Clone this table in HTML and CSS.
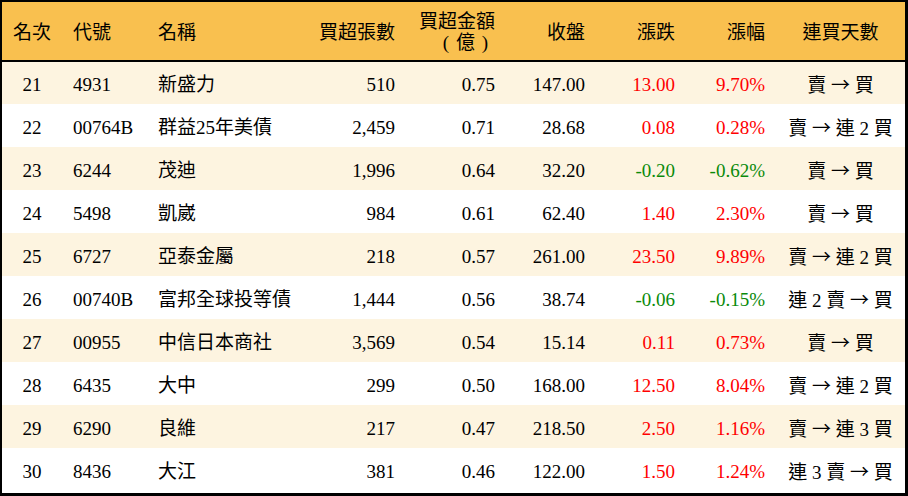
FILE: index.html
```html
<!DOCTYPE html>
<html lang="zh-Hant">
<head>
<meta charset="utf-8">
<link rel="stylesheet" href="styles.css">
</head>
<body>
<div class="frame">
<table class="rank">
  <colgroup>
    <col class="c1"><col class="c2"><col class="c3"><col class="c4"><col class="c5"><col class="c6"><col class="c7"><col class="c8"><col class="c9">
  </colgroup>
  <thead>
    <tr>
      <th class="ctr">名次</th>
      <th class="lft">代號</th>
      <th class="lft">名稱</th>
      <th class="rgt">買超張數</th>
      <th class="rgt two">買超金額<br><span class="paren">(&nbsp;億&nbsp;)</span></th>
      <th class="rgt">收盤</th>
      <th class="rgt">漲跌</th>
      <th class="rgt">漲幅</th>
      <th class="ctr">連買天數</th>
    </tr>
  </thead>
  <tbody>
    <tr class="odd"><td class="ctr">21</td><td class="lft">4931</td><td class="lft">新盛力</td><td class="rgt">510</td><td class="rgt">0.75</td><td class="rgt">147.00</td><td class="rgt up">13.00</td><td class="rgt up">9.70%</td><td class="ctr">賣 <span class="arr">→</span> 買</td></tr>
    <tr><td class="ctr">22</td><td class="lft">00764B</td><td class="lft">群益25年美債</td><td class="rgt">2,459</td><td class="rgt">0.71</td><td class="rgt">28.68</td><td class="rgt up">0.08</td><td class="rgt up">0.28%</td><td class="ctr">賣 <span class="arr">→</span> 連 2 買</td></tr>
    <tr class="odd"><td class="ctr">23</td><td class="lft">6244</td><td class="lft">茂迪</td><td class="rgt">1,996</td><td class="rgt">0.64</td><td class="rgt">32.20</td><td class="rgt dn">-0.20</td><td class="rgt dn">-0.62%</td><td class="ctr">賣 <span class="arr">→</span> 買</td></tr>
    <tr><td class="ctr">24</td><td class="lft">5498</td><td class="lft">凱崴</td><td class="rgt">984</td><td class="rgt">0.61</td><td class="rgt">62.40</td><td class="rgt up">1.40</td><td class="rgt up">2.30%</td><td class="ctr">賣 <span class="arr">→</span> 買</td></tr>
    <tr class="odd"><td class="ctr">25</td><td class="lft">6727</td><td class="lft">亞泰金屬</td><td class="rgt">218</td><td class="rgt">0.57</td><td class="rgt">261.00</td><td class="rgt up">23.50</td><td class="rgt up">9.89%</td><td class="ctr">賣 <span class="arr">→</span> 連 2 買</td></tr>
    <tr><td class="ctr">26</td><td class="lft">00740B</td><td class="lft">富邦全球投等債</td><td class="rgt">1,444</td><td class="rgt">0.56</td><td class="rgt">38.74</td><td class="rgt dn">-0.06</td><td class="rgt dn">-0.15%</td><td class="ctr">連 2 賣 <span class="arr">→</span> 買</td></tr>
    <tr class="odd"><td class="ctr">27</td><td class="lft">00955</td><td class="lft">中信日本商社</td><td class="rgt">3,569</td><td class="rgt">0.54</td><td class="rgt">15.14</td><td class="rgt up">0.11</td><td class="rgt up">0.73%</td><td class="ctr">賣 <span class="arr">→</span> 買</td></tr>
    <tr><td class="ctr">28</td><td class="lft">6435</td><td class="lft">大中</td><td class="rgt">299</td><td class="rgt">0.50</td><td class="rgt">168.00</td><td class="rgt up">12.50</td><td class="rgt up">8.04%</td><td class="ctr">賣 <span class="arr">→</span> 連 2 買</td></tr>
    <tr class="odd"><td class="ctr">29</td><td class="lft">6290</td><td class="lft">良維</td><td class="rgt">217</td><td class="rgt">0.47</td><td class="rgt">218.50</td><td class="rgt up">2.50</td><td class="rgt up">1.16%</td><td class="ctr">賣 <span class="arr">→</span> 連 3 買</td></tr>
    <tr><td class="ctr">30</td><td class="lft">8436</td><td class="lft">大江</td><td class="rgt">381</td><td class="rgt">0.46</td><td class="rgt">122.00</td><td class="rgt up">1.50</td><td class="rgt up">1.24%</td><td class="ctr">連 3 賣 <span class="arr">→</span> 買</td></tr>
  </tbody>
</table>
</div>
</body>
</html>
```
FILE: styles.css
```css
html, body {
  margin: 0;
  padding: 0;
  background: #ffffff;
}

.frame {
  width: 908px;
  height: 496px;
  box-sizing: border-box;
  border-style: solid;
  border-color: #000000;
  border-width: 2px 3px 3px 2px;
  background: #ffffff;
  overflow: hidden;
}

.rank {
  width: 903px;
  border-collapse: collapse;
  border-spacing: 0;
  table-layout: fixed;
  font-family: "Liberation Serif", "Noto Sans CJK TC", serif;
  font-size: 19px;
  color: #000000;
}

.c1 { width: 60px; }
.c2 { width: 85px; }
.c3 { width: 153px; }
.c4 { width: 106px; }
.c5 { width: 100px; }
.c6 { width: 90px; }
.c7 { width: 90px; }
.c8 { width: 90px; }
.c9 { width: 129px; }

.rank th {
  height: 59px;
  padding: 3px 11px 0 11px;
  box-sizing: border-box;
  background: #f9c04f;
  font-weight: normal;
  line-height: 21px;
  border-bottom: 2px solid #000000;
  white-space: nowrap;
}

.rank th.two {
  padding-top: 2px;
}

.rank td {
  height: 43px;
  padding: 3px 11px 0 11px;
  box-sizing: border-box;
  line-height: 21px;
  white-space: nowrap;
}

.rank tr.odd td {
  background: #fdf4e0;
}

.lft { text-align: left; }
.rgt { text-align: right; }
.ctr { text-align: center; }
.rank td.ctr, .rank th.ctr { padding-left: 0; padding-right: 0; }

.up { color: #ff0000; }
.dn { color: #0a8a0a; }

.paren {
  display: inline-block;
  letter-spacing: 1px;
  margin-right: 6px;
}

.arr {
  font-family: "Noto Sans CJK TC", "DejaVu Sans", sans-serif;
}
```
